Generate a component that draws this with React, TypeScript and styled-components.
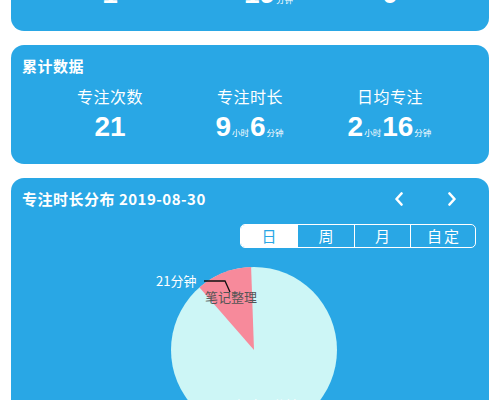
import React from "react";
import styled, { createGlobalStyle } from "styled-components";

const GlobalStyle = createGlobalStyle`
  html, body {
    margin: 0;
    padding: 0;
    background: #fff;
    overflow: hidden;
  }
  body {
    font-family: "Noto Sans CJK SC", "Noto Sans", sans-serif;
  }
`;

const BLUE = "#29a7e5";

const Page = styled.div`
  width: 500px;
  height: 400px;
  padding: 0 11px;
  box-sizing: border-box;
  display: flex;
  flex-direction: column;
  gap: 14px;
  overflow: hidden;
`;

const Card = styled.section<{ $offset?: number }>`
  flex-shrink: 0;
  background: ${BLUE};
  border-radius: 13px;
  color: #fff;
  margin-top: ${(p) => p.$offset ?? 0}px;
`;

const StatsCard = styled(Card)`
  padding: 10px 11px 21px;
  height: 119px;
  box-sizing: border-box;
`;

const CardTitle = styled.h2`
  margin: 0;
  font-size: 15px;
  line-height: 22px;
  font-weight: 600;
  letter-spacing: 0.5px;
`;

const StatsGrid = styled.div`
  display: grid;
  grid-template-columns: repeat(3, 140px);
  justify-content: center;
  margin-top: 9px;
  margin-left: -11px;
  margin-right: -11px;
`;

const Stat = styled.div`
  display: flex;
  flex-direction: column;
  align-items: center;
`;

const StatLabel = styled.div`
  font-size: 16px;
  line-height: 20px;
  letter-spacing: 0.5px;
`;

const StatValue = styled.div<{ $shift?: number }>`
  display: flex;
  align-items: baseline;
  height: 34px;
  margin-top: 4px;
  margin-left: ${(p) => p.$shift ?? 0}px;
`;

const Num = styled.span`
  font-family: "Liberation Sans", "Noto Sans", sans-serif;
  font-weight: 700;
  font-size: 28px;
  line-height: 34px;
`;

const Unit = styled.span`
  font-size: 8.5px;
  margin: 0 1px;
`;

const ChartCard = styled(Card)`
  min-height: 240px;
`;

const ChartHeader = styled.div`
  display: flex;
  align-items: center;
  justify-content: space-between;
  padding: 10px 22px 0 11px;
  height: 22px;
`;

const ArrowGroup = styled.div`
  display: flex;
  gap: 23px;
`;

const ArrowButton = styled.button`
  width: 30px;
  height: 22px;
  padding: 0;
  border: none;
  background: transparent;
  display: flex;
  align-items: center;
  justify-content: center;
  cursor: pointer;
`;

const SegmentRow = styled.div`
  display: flex;
  justify-content: flex-end;
  padding: 0 13px 0 0;
  margin-top: 14px;
`;

const Segmented = styled.div`
  display: flex;
  border: 1px solid #fff;
  border-radius: 5px;
  overflow: hidden;
  height: 22px;
`;

const Segment = styled.button<{ $active?: boolean; $width: number }>`
  width: ${(p) => p.$width}px;
  border: none;
  border-left: 1px solid #fff;
  padding: 0;
  font-family: inherit;
  font-size: 15px;
  line-height: 22px;
  letter-spacing: 2px;
  text-indent: 2px;
  color: ${(p) => (p.$active ? BLUE : "#fff")};
  background: ${(p) => (p.$active ? "#fff" : "transparent")};
  &:first-child {
    border-left: none;
  }
`;

const Chart = styled.svg`
  display: block;
  margin-top: 6px;
`;

const Chevron = ({ dir }: { dir: "left" | "right" }) => (
  <svg width="10" height="14" viewBox="0 0 10 14">
    <path
      d={dir === "left" ? "M7.5 1.5 L2.5 7 L7.5 12.5" : "M2.5 1.5 L7.5 7 L2.5 12.5"}
      fill="none"
      stroke="#fff"
      strokeWidth="2.6"
      strokeLinecap="round"
      strokeLinejoin="round"
    />
  </svg>
);

type StatItem = { label: string; parts: [string, string?][]; shift?: number };

const todayStats: StatItem[] = [
  { label: "专注次数", parts: [["1"]] },
  { label: "专注时长", parts: [["19", "分钟"]], shift: 38 },
  { label: "放弃次数", parts: [["0"]] },
];

const totalStats: StatItem[] = [
  { label: "专注次数", parts: [["21"]] },
  { label: "专注时长", parts: [["9", "小时"], ["6", "分钟"]] },
  { label: "日均专注", parts: [["2", "小时"], ["16", "分钟"]] },
];

const StatsBlock = ({ title, items, offset }: { title: string; items: StatItem[]; offset?: number }) => (
  <StatsCard $offset={offset}>
    <CardTitle>{title}</CardTitle>
    <StatsGrid>
      {items.map((s) => (
        <Stat key={s.label}>
          <StatLabel>{s.label}</StatLabel>
          <StatValue $shift={s.shift}>
            {s.parts.map(([n, u], i) => (
              <React.Fragment key={i}>
                <Num>{n}</Num>
                {u && <Unit>{u}</Unit>}
              </React.Fragment>
            ))}
          </StatValue>
        </Stat>
      ))}
    </StatsGrid>
  </StatsCard>
);

// pie geometry in chart coordinates (card left edge = 0)
const cx = 243;
const cy = 96;
const r = 83;
const pt = (deg: number) => {
  const a = (deg * Math.PI) / 180;
  return [cx + r * Math.sin(a), cy - r * Math.cos(a)];
};

export default function App() {
  const [a1, b1] = pt(-41);
  const [a2, b2] = pt(-2);
  const segments = [
    { label: "日", width: 56 },
    { label: "周", width: 57 },
    { label: "月", width: 56 },
    { label: "自定", width: 65 },
  ];

  return (
    <>
      <GlobalStyle />
      <Page>
        <StatsBlock title="今日数据" items={todayStats} offset={-88} />
        <StatsBlock title="累计数据" items={totalStats} />
        <ChartCard>
          <ChartHeader>
            <CardTitle>专注时长分布 2019-08-30</CardTitle>
            <ArrowGroup>
              <ArrowButton aria-label="prev">
                <Chevron dir="left" />
              </ArrowButton>
              <ArrowButton aria-label="next">
                <Chevron dir="right" />
              </ArrowButton>
            </ArrowGroup>
          </ChartHeader>
          <SegmentRow>
            <Segmented>
              {segments.map((s, i) => (
                <Segment key={s.label} $active={i === 0} $width={s.width}>
                  {s.label}
                </Segment>
              ))}
            </Segmented>
          </SegmentRow>
          <Chart width="478" height="200" viewBox="0 0 478 200">
            <circle cx={cx} cy={cy} r={r} fill="#cdf6f6" />
            <path
              d={`M${cx},${cy} L${a1.toFixed(1)},${b1.toFixed(1)} A${r},${r} 0 0 1 ${a2.toFixed(1)},${b2.toFixed(1)} Z`}
              fill="#f78a9b"
            />
            <polyline points="193,27 214,27 219,38" fill="none" stroke="#111" strokeWidth="1.3" />
            <text x="145" y="32" fill="#fff" fontSize="13" fontFamily="'Noto Sans CJK SC', sans-serif">
              21分钟
            </text>
            <text x="194" y="48" fill="#555" fontSize="13" fontFamily="'Noto Sans CJK SC', sans-serif">
              笔记整理
            </text>
            <text x="214" y="156" fill="#fff" fontSize="13" fontFamily="'Noto Sans CJK SC', sans-serif">
              8小时45分钟
            </text>
          </Chart>
        </ChartCard>
      </Page>
    </>
  );
}
